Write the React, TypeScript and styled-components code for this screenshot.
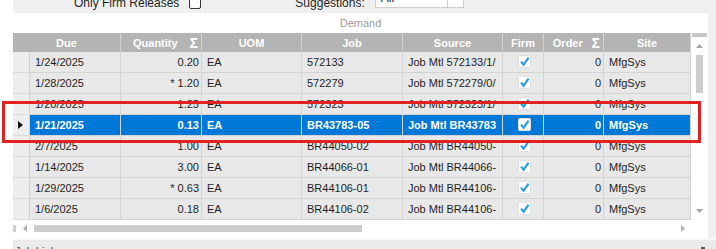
import styled, { createGlobalStyle } from "styled-components";

const GlobalStyle = createGlobalStyle`
  html, body {
    margin: 0;
    padding: 0;
    background: #f0f0f0;
  }
  body {
    font-family: "Liberation Sans", Arial, sans-serif;
  }
`;

const COLS = "17px 91px 81px 100px 101px 100px 41px 60px 87px";

const Screen = styled.div`
  position: relative;
  display: flex;
  width: 716px;
  height: 249px;
  overflow: hidden;
  background: #f0f0f0;
  font-family: "Liberation Sans", Arial, sans-serif;
  color: #1e1e1e;
`;

const Gutter = styled.div`
  width: 13px;
  flex-shrink: 0;
  background: #fff;
`;

const Main = styled.div`
  flex: 1;
  display: flex;
  flex-direction: column;
  min-width: 0;
`;

const TopBar = styled.div`
  height: 13px;
  flex-shrink: 0;
  display: flex;
  align-items: flex-end;
  padding-left: 61px;
  overflow: hidden;
  font-size: 12px;
`;

const BarLabel = styled.span<{ $gap?: number }>`
  line-height: 14px;
  margin: 0 0 3px ${(p) => p.$gap ?? 0}px;
  white-space: nowrap;
`;

const BarCheck = styled.span`
  width: 12px;
  height: 12px;
  box-sizing: border-box;
  flex-shrink: 0;
  margin: 0 0 4px 10px;
  border: 1px solid #333;
  border-radius: 2px;
  background: #fff;
`;

const Combo = styled.div`
  width: 89px;
  height: 18px;
  box-sizing: border-box;
  flex-shrink: 0;
  display: flex;
  margin: 0 0 5px 10px;
  border: 1px solid #cfcfcf;
  background: #fff;
`;

const ComboText = styled.span`
  flex: 1;
  padding-left: 5px;
  line-height: 14px;
`;

const ComboButton = styled.span`
  width: 16px;
  display: flex;
  align-items: flex-end;
  justify-content: center;
  border-left: 1px solid #cfcfcf;
  padding-bottom: 8px;
  box-sizing: border-box;
`;

const Panel = styled.div`
  width: 695px;
  height: 225px;
  flex-shrink: 0;
  display: flex;
  flex-direction: column;
  background: #fff;
`;

const Caption = styled.div`
  height: 20px;
  line-height: 20px;
  text-align: center;
  font-size: 11px;
  color: #9b9b9b;
`;

const GridArea = styled.div`
  display: flex;
  height: 187px;
`;

const Grid = styled.div`
  width: 678px;
  display: flex;
  flex-direction: column;
`;

const HeaderRow = styled.div`
  display: grid;
  grid-template-columns: ${COLS};
  height: 19px;
  background: #b4b4b4;
`;

const HeaderCell = styled.div<{ $span?: number }>`
  grid-column: span ${(p) => p.$span ?? 1};
  display: flex;
  align-items: center;
  overflow: hidden;
  border-right: 1px solid #d2d2d2;
  color: #fff;
  font-size: 11px;
  font-weight: bold;
  white-space: nowrap;
`;

const HeaderText = styled.span`
  flex: 1;
  text-align: center;
`;

const Sigma = styled.span`
  margin-right: 3px;
  font-size: 14px;
  font-weight: bold;
  line-height: 1;
`;

const DataRow = styled.div`
  display: grid;
  grid-template-columns: ${COLS};
  height: 21px;
`;

const RowHead = styled.div`
  display: flex;
  align-items: center;
  padding-left: 5px;
  box-sizing: border-box;
  background: #eeeeee;
  border-right: 1px solid #d3d3d3;
  border-bottom: 1px solid #dadada;
`;

const Cell = styled.div<{ $align?: "left" | "right" | "center"; $selected?: boolean }>`
  box-sizing: border-box;
  display: flex;
  align-items: center;
  justify-content: ${(p) =>
    p.$align === "right" ? "flex-end" : p.$align === "center" ? "center" : "flex-start"};
  padding: 0 2px 1px 5px;
  overflow: hidden;
  white-space: nowrap;
  font-size: 11px;
  line-height: 20px;
  border-right: 1px solid #d3d3d3;
  border-bottom: 1px solid #d3d3d3;
  background: ${(p) => (p.$selected ? "#0078d7" : "#e8e8e8")};
  color: ${(p) => (p.$selected ? "#fff" : "#1e1e1e")};
  font-weight: ${(p) => (p.$selected ? "bold" : "normal")};
`;

const VScroll = styled.div`
  width: 17px;
  display: flex;
  flex-direction: column;
  align-items: center;
  background: #fff;
`;

const ScrollCap = styled.div`
  width: 15px;
  height: 4px;
  background: #c6c6c6;
`;

const VThumb = styled.div`
  width: 7px;
  height: 38px;
  margin-top: 7px;
  background: #cdcdcd;
`;

const Spacer = styled.div`
  flex: 1;
`;

const Arrow = styled.svg<{ $m: string }>`
  display: block;
  flex-shrink: 0;
  margin: ${(p) => p.$m};
`;

const HScroll = styled.div`
  height: 17px;
  display: flex;
  align-items: center;
`;

const HStub = styled.div`
  width: 3px;
  height: 7px;
  background: #cdcdcd;
`;

const HThumb = styled.div`
  width: 328px;
  height: 7px;
  margin-left: 7px;
  background: #cdcdcd;
`;

const Corner = styled.div`
  width: 17px;
  height: 17px;
`;

const BottomBar = styled.div`
  flex: 1;
  display: flex;
  align-items: flex-start;
  padding: 5px 0 0 2px;
  border-top: 2px solid #f8f8f8;
  background: #ebebeb;
  overflow: hidden;
`;

const BottomLabel = styled.span`
  font-size: 11px;
  line-height: 13px;
  color: #444;
`;

const BottomIcon = styled.span`
  width: 4px;
  height: 2px;
  margin: 2px 11px 0 auto;
  background: #555;
`;

const Highlight = styled.div`
  position: absolute;
  left: 2px;
  top: 101px;
  width: 699px;
  height: 42px;
  box-sizing: border-box;
  border: 3px solid #e3211f;
  pointer-events: none;
`;

interface Demand {
  due: string;
  qty: string;
  uom: string;
  job: string;
  source: string;
  order: string;
  site: string;
  selected?: boolean;
}

const rows: Demand[] = [
  { due: "1/24/2025", qty: "0.20", uom: "EA", job: "572133", source: "Job Mtl 572133/1/", order: "0", site: "MfgSys" },
  { due: "1/28/2025", qty: "* 1.20", uom: "EA", job: "572279", source: "Job Mtl 572279/0/", order: "0", site: "MfgSys" },
  { due: "1/20/2025", qty: "1.25", uom: "EA", job: "572323", source: "Job Mtl 572323/1/", order: "0", site: "MfgSys" },
  { due: "1/21/2025", qty: "0.13", uom: "EA", job: "BR43783-05", source: "Job Mtl BR43783", order: "0", site: "MfgSys", selected: true },
  { due: "2/7/2025", qty: "1.00", uom: "EA", job: "BR44050-02", source: "Job Mtl BR44050-", order: "0", site: "MfgSys" },
  { due: "1/14/2025", qty: "3.00", uom: "EA", job: "BR44066-01", source: "Job Mtl BR44066-", order: "0", site: "MfgSys" },
  { due: "1/29/2025", qty: "* 0.63", uom: "EA", job: "BR44106-01", source: "Job Mtl BR44106-", order: "0", site: "MfgSys" },
  { due: "1/6/2025", qty: "0.18", uom: "EA", job: "BR44106-02", source: "Job Mtl BR44106-", order: "0", site: "MfgSys" },
];

function FirmCheck() {
  return (
    <svg width="13" height="13" viewBox="0 0 13 13">
      <rect x="0.5" y="0.5" width="12" height="12" rx="1" fill="#fff" stroke="#e0e0e0" />
      <path d="M3 6.6 L5.6 9.6 L10.6 2.6" fill="none" stroke="#2b9ee2" strokeWidth="2.2" />
    </svg>
  );
}

function DemandGrid() {
  return (
    <Grid>
      <HeaderRow>
        <HeaderCell $span={2}>
          <HeaderText>Due</HeaderText>
        </HeaderCell>
        <HeaderCell>
          <HeaderText>Quantity</HeaderText>
          <Sigma>Σ</Sigma>
        </HeaderCell>
        <HeaderCell>
          <HeaderText>UOM</HeaderText>
        </HeaderCell>
        <HeaderCell>
          <HeaderText>Job</HeaderText>
        </HeaderCell>
        <HeaderCell>
          <HeaderText>Source</HeaderText>
        </HeaderCell>
        <HeaderCell>
          <HeaderText>Firm</HeaderText>
        </HeaderCell>
        <HeaderCell>
          <HeaderText>Order</HeaderText>
          <Sigma>Σ</Sigma>
        </HeaderCell>
        <HeaderCell>
          <HeaderText>Site</HeaderText>
        </HeaderCell>
      </HeaderRow>
      {rows.map((r) => (
        <DataRow key={r.job}>
          <RowHead>
            {r.selected && (
              <svg width="5" height="8" viewBox="0 0 5 8">
                <path d="M0 0 L5 4 L0 8 Z" fill="#111" />
              </svg>
            )}
          </RowHead>
          <Cell $selected={r.selected}>{r.due}</Cell>
          <Cell $selected={r.selected} $align="right">{r.qty}</Cell>
          <Cell $selected={r.selected}>{r.uom}</Cell>
          <Cell $selected={r.selected}>{r.job}</Cell>
          <Cell $selected={r.selected}>{r.source}</Cell>
          <Cell $selected={r.selected} $align="center">
            <FirmCheck />
          </Cell>
          <Cell $selected={r.selected} $align="right">{r.order}</Cell>
          <Cell $selected={r.selected}>{r.site}</Cell>
        </DataRow>
      ))}
    </Grid>
  );
}

export default function App() {
  return (
    <>
      <GlobalStyle />
      <Screen>
        <Gutter />
        <Main>
          <TopBar>
            <BarLabel>Only Firm Releases</BarLabel>
            <BarCheck />
            <BarLabel $gap={94}>Suggestions:</BarLabel>
            <Combo>
              <ComboText>All</ComboText>
              <ComboButton>
                <svg width="7" height="4" viewBox="0 0 7 4">
                  <path d="M0 0 L7 0 L3.5 4 Z" fill="#333" />
                </svg>
              </ComboButton>
            </Combo>
          </TopBar>
          <Panel>
            <Caption>Demand</Caption>
            <GridArea>
              <DemandGrid />
              <VScroll>
                <ScrollCap />
                <Arrow width="7" height="4" viewBox="0 0 7 4" $m="7px 0 0">
                  <path d="M3.5 0 L7 4 L0 4 Z" fill="#a6a6a6" />
                </Arrow>
                <VThumb />
                <Spacer />
                <Arrow width="7" height="4" viewBox="0 0 7 4" $m="0 0 7px">
                  <path d="M0 0 L7 0 L3.5 4 Z" fill="#a6a6a6" />
                </Arrow>
              </VScroll>
            </GridArea>
            <HScroll>
              <HStub />
              <Arrow width="4" height="7" viewBox="0 0 4 7" $m="0 0 0 7px">
                <path d="M4 0 L4 7 L0 3.5 Z" fill="#b0b0b0" />
              </Arrow>
              <HThumb />
              <Spacer />
              <Arrow width="4" height="7" viewBox="0 0 4 7" $m="0 6px 0 0">
                <path d="M0 0 L4 3.5 L0 7 Z" fill="#b0b0b0" />
              </Arrow>
              <Corner />
            </HScroll>
          </Panel>
          <BottomBar>
            <BottomLabel>Job Links</BottomLabel>
            <BottomIcon />
          </BottomBar>
        </Main>
        <Highlight />
      </Screen>
    </>
  );
}
